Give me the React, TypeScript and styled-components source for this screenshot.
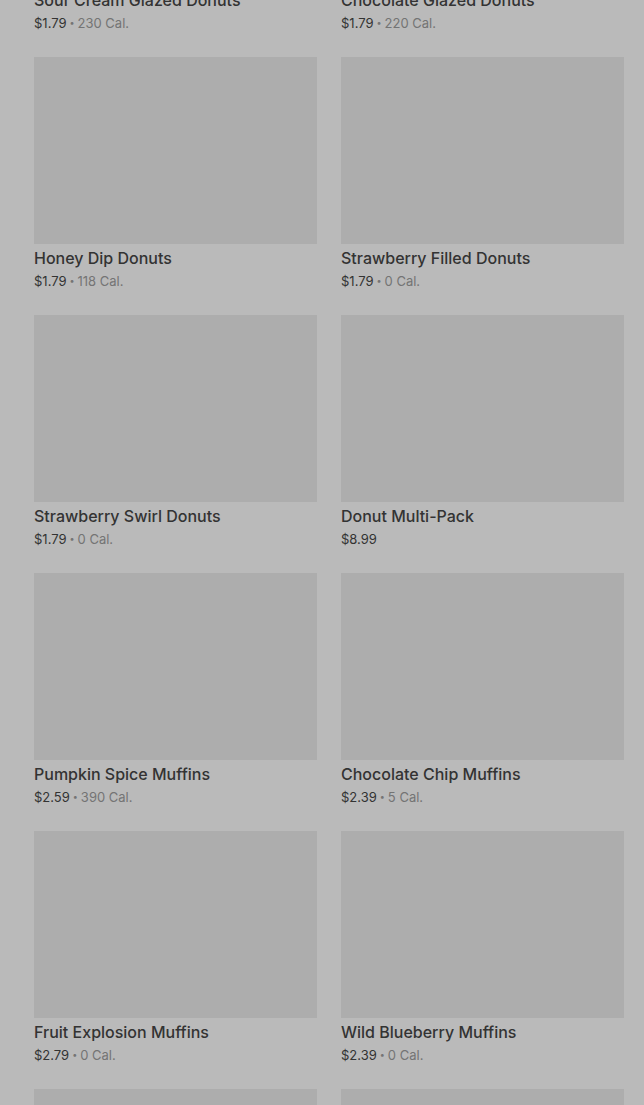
import React from "react";
import styled, { createGlobalStyle } from "styled-components";

const GlobalStyle = createGlobalStyle`
  html, body {
    margin: 0;
    padding: 0;
    background: #bababa;
    overflow: hidden;
  }
  body {
    font-family: Inter, "Noto Sans", Roboto, sans-serif;
  }
`;

const Page = styled.div`
  width: 644px;
  height: 1105px;
  overflow: hidden;
  background: #bababa;
`;

const Grid = styled.div`
  display: grid;
  grid-template-columns: 283px 283px;
  column-gap: 24px;
  row-gap: 25px;
  padding: 0 20px 0 34px;
  margin-top: -201px;
`;

const Card = styled.div`
  display: flex;
  flex-direction: column;
`;

const Thumb = styled.div`
  height: 187px;
  background: #adadad;
`;

const Name = styled.div`
  margin-top: 4px;
  font-size: 16px;
  line-height: 20px;
  font-weight: 500;
  color: #333333;
  white-space: nowrap;
`;

const Meta = styled.div`
  margin-top: 4px;
  height: 18px;
  display: flex;
  align-items: center;
  font-size: 13px;
  line-height: 18px;
  color: #747474;
  white-space: nowrap;
`;

const Price = styled.span`
  color: #333333;
`;

const Dot = styled.span`
  margin: 0 3px;
  font-size: 9px;
  line-height: 18px;
`;

type Item = { name: string; price: string; cal?: string };

const items: Item[] = [
  { name: "Sour Cream Glazed Donuts", price: "$1.79", cal: "230 Cal." },
  { name: "Chocolate Glazed Donuts", price: "$1.79", cal: "220 Cal." },
  { name: "Honey Dip Donuts", price: "$1.79", cal: "118 Cal." },
  { name: "Strawberry Filled Donuts", price: "$1.79", cal: "0 Cal." },
  { name: "Strawberry Swirl Donuts", price: "$1.79", cal: "0 Cal." },
  { name: "Donut Multi-Pack", price: "$8.99" },
  { name: "Pumpkin Spice Muffins", price: "$2.59", cal: "390 Cal." },
  { name: "Chocolate Chip Muffins", price: "$2.39", cal: "5 Cal." },
  { name: "Fruit Explosion Muffins", price: "$2.79", cal: "0 Cal." },
  { name: "Wild Blueberry Muffins", price: "$2.39", cal: "0 Cal." },
];

export default function App() {
  return (
    <Page>
      <GlobalStyle />
      <Grid>
        {items.map((item) => (
          <Card key={item.name}>
            <Thumb />
            <Name>{item.name}</Name>
            <Meta>
              <Price>{item.price}</Price>
              {item.cal ? (
                <>
                  <Dot>•</Dot>
                  {item.cal}
                </>
              ) : null}
            </Meta>
          </Card>
        ))}
        {/* next row, only the top of its pictures is in view */}
        <Thumb />
        <Thumb />
      </Grid>
    </Page>
  );
}
